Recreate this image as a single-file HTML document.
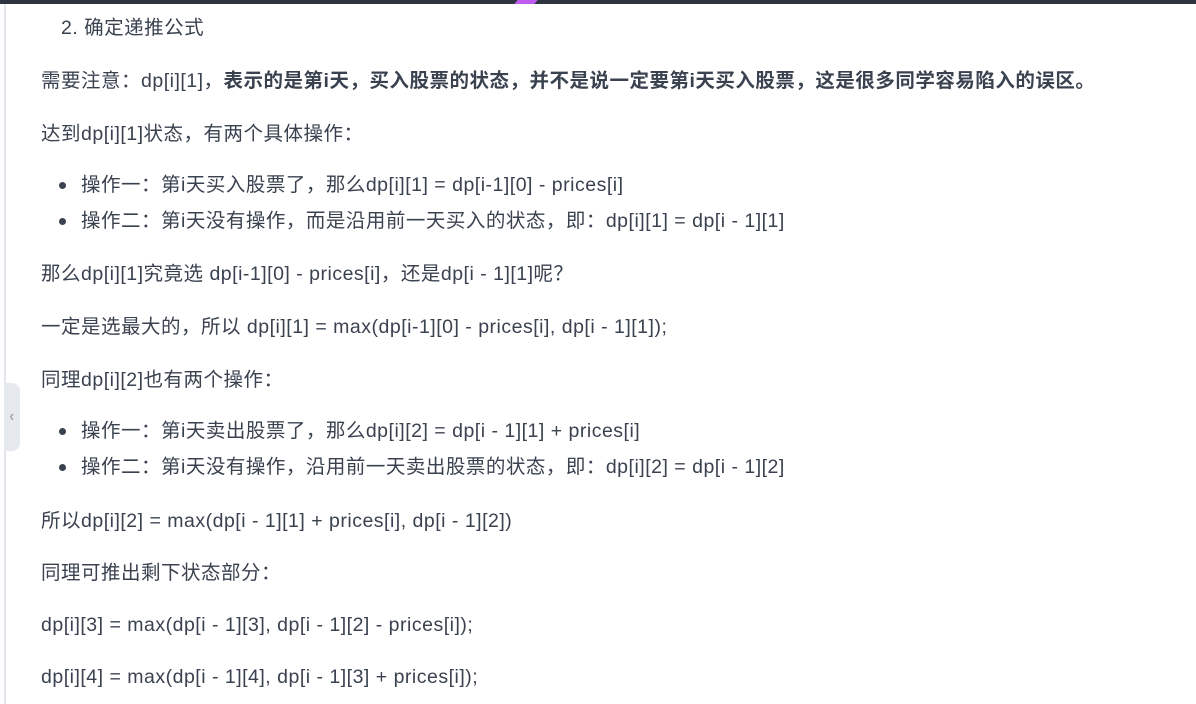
<!DOCTYPE html>
<html><head><meta charset="utf-8"><style>
html,body{margin:0;padding:0;background:#fff;width:1196px;height:704px;overflow:hidden}
body{font-family:"Liberation Sans","Noto Sans CJK SC",sans-serif;font-size:19.5px;letter-spacing:0.5px;color:#3a4250;position:relative}
.top{position:absolute;left:0;top:0;width:1196px;height:4px;background:#2e3440}
.pur{position:absolute;left:516px;top:0;width:20px;height:4px;background:#c05cf0;transform:skewX(-40deg)}
.lb{position:absolute;left:4px;top:4px;width:2px;height:700px;background:#e3e6ea}
.tab{position:absolute;left:4px;top:383px;width:16px;height:68px;background:#e6e9ee;border-radius:0 8px 8px 0;color:#aab;font-size:16px;font-weight:bold;text-align:center;line-height:68px}
.l{position:absolute;left:41px;white-space:nowrap;line-height:24px}
.b{font-weight:bold}
.dot{position:absolute;left:59px;width:7px;height:7px;border-radius:50%;background:#3a4250}
</style></head><body>
<div class="top"></div><div class="pur"></div><div class="lb"></div>
<div class="tab">‹</div>
<div class="l" style="left:61px;top:16px">2. 确定递推公式</div>
<div class="l" style="top:69px">需要注意：dp[i][1]，<span class="b">表示的是第i天，买入股票的状态，并不是说一定要第i天买入股票，这是很多同学容易陷入的误区。</span></div>
<div class="l" style="top:122px">达到dp[i][1]状态，有两个具体操作：</div>
<div class="dot" style="top:182px"></div>
<div class="l" style="left:81px;top:173px">操作一：第i天买入股票了，那么dp[i][1] = dp[i-1][0] - prices[i]</div>
<div class="dot" style="top:218px"></div>
<div class="l" style="left:81px;top:209px">操作二：第i天没有操作，而是沿用前一天买入的状态，即：dp[i][1] = dp[i - 1][1]</div>
<div class="l" style="top:262px">那么dp[i][1]究竟选 dp[i-1][0] - prices[i]，还是dp[i - 1][1]呢？</div>
<div class="l" style="top:315px">一定是选最大的，所以 dp[i][1] = max(dp[i-1][0] - prices[i], dp[i - 1][1]);</div>
<div class="l" style="top:368px">同理dp[i][2]也有两个操作：</div>
<div class="dot" style="top:428px"></div>
<div class="l" style="left:81px;top:419px">操作一：第i天卖出股票了，那么dp[i][2] = dp[i - 1][1] + prices[i]</div>
<div class="dot" style="top:464px"></div>
<div class="l" style="left:81px;top:455px">操作二：第i天没有操作，沿用前一天卖出股票的状态，即：dp[i][2] = dp[i - 1][2]</div>
<div class="l" style="top:509px">所以dp[i][2] = max(dp[i - 1][1] + prices[i], dp[i - 1][2])</div>
<div class="l" style="top:561px">同理可推出剩下状态部分：</div>
<div class="l" style="top:613px">dp[i][3] = max(dp[i - 1][3], dp[i - 1][2] - prices[i]);</div>
<div class="l" style="top:665px">dp[i][4] = max(dp[i - 1][4], dp[i - 1][3] + prices[i]);</div>
</body></html>
